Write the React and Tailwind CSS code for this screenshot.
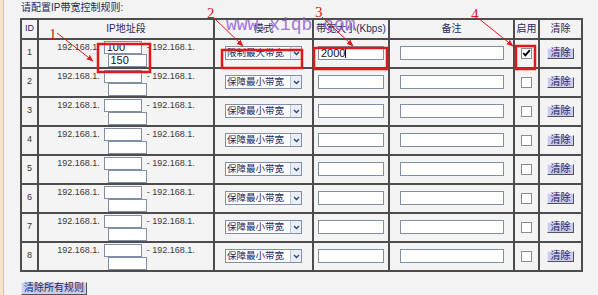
import React from 'react';

const ROWS = [1, 2, 3, 4, 5, 6, 7, 8];

const font = "font-['Liberation_Sans','Noto_Sans_CJK_SC',sans-serif]";

function TextBox({ w, h = 13, value, cursor, className = '' }) {
  return (
    <div
      className={`bg-white border border-[#7f8fa8] flex items-center pl-[2px] text-[11px] leading-none text-[#111] ${className}`}
      style={{ width: w, height: h }}
    >
      {value}
      {cursor && <span className="w-px h-[10px] bg-black" />}
    </div>
  );
}

function Select({ label }) {
  return (
    <div className="w-[77px] h-[14px] bg-white border border-[#7f8fa8] flex items-stretch">
      <div className="flex-1 flex items-center pl-[1px] text-[9.5px] leading-none text-[#1d2658] whitespace-nowrap">{label}</div>
      <div className="w-[11px] shrink-0 bg-[#e9eef8] border-l border-[#b8c4dc] flex items-center justify-center">
        <svg width="7" height="5" viewBox="0 0 7 5">
          <path d="M1 1 L3.5 3.5 L6 1" fill="none" stroke="#2b3f7a" strokeWidth="1.3" />
        </svg>
      </div>
    </div>
  );
}

function ClearBtn({ label = '清除', className = '' }) {
  return (
    <div
      className={`bg-[#c9cbf2] border border-[#e8e8ff] border-r-[#555] border-b-[#555] text-[10px] leading-none text-[#1d2658] flex items-center justify-center ${className}`}
    >
      {label}
    </div>
  );
}

function Check({ checked }) {
  return (
    <div className="w-[11px] h-[11px] bg-white border border-[#8c8c8c] flex items-center justify-center">
      {checked && (
        <svg width="9" height="8" viewBox="0 0 9 8">
          <path d="M1.2 4 L3.4 6.3 L7.8 1.2" fill="none" stroke="#000" strokeWidth="1.8" />
        </svg>
      )}
    </div>
  );
}

const cell = 'bg-[#f4f4f4] flex items-center justify-center';

export default function App() {
  return (
    <div className={`relative w-[598px] h-[295px] overflow-hidden bg-[#f3f3f3] flex ${font}`}>
      <div className="w-[4px] shrink-0 bg-[#f6e4c8] border-r border-[#e6bf8c]" />

      <div className="pl-[16px] flex flex-col">
        <div className="h-[21px] pt-[2px] pl-px text-[10px] leading-[12px] text-[#1f2a5c]">请配置IP带宽控制规则:</div>

        <div className="grid grid-cols-[15px_174px_97px_74px_123px_23px_41px] grid-rows-[18px_repeat(8,27px)] gap-[2px] p-[2px] bg-[#4d4d4d] w-[563px]">
          <div className={`${cell} text-[9px] text-[#1f2a5c]`}>ID</div>
          <div className={`${cell} text-[10px] text-[#1f2a5c]`}>IP地址段</div>
          <div className={`${cell} text-[10px] text-[#1f2a5c]`}>模式</div>
          <div className={`${cell} text-[10px] text-[#1f2a5c]`}>带宽大小(Kbps)</div>
          <div className={`${cell} text-[10px] text-[#1f2a5c]`}>备注</div>
          <div className={`${cell} text-[10px] text-[#1f2a5c]`}>启用</div>
          <div className={`${cell} text-[10px] text-[#1f2a5c]`}>清除</div>

          {ROWS.map((id) => {
            const first = id === 1;
            return (
              <React.Fragment key={id}>
                <div className={`${cell} text-[9px] text-[#333]`}>{id}</div>
                <div className="bg-[#f4f4f4] flex flex-col items-center justify-start pt-[1px]">
                  <div className="flex items-start text-[9px] leading-[10px] text-[#3a3a3a]">
                    <span className="pt-[1px] mr-[4px]">192.168.1.</span>
                    <TextBox w={38} value={first ? '100' : ''} />
                    <span className="pt-[1px] ml-[5px]">- 192.168.1.</span>
                  </div>
                  <TextBox w={39} h={13} value={first ? '150' : ''} className="ml-[2px]" />
                </div>
                <div className={cell}>
                  <Select label={first ? '限制最大带宽' : '保障最小带宽'} />
                </div>
                <div className={cell}>
                  <TextBox w={66} h={14} value={first ? '2000' : ''} cursor={first} />
                </div>
                <div className={cell}>
                  <TextBox w={104} h={14} />
                </div>
                <div className={cell}>
                  <Check checked={first} />
                </div>
                <div className={cell}>
                  <ClearBtn className="w-[27px] h-[11px]" />
                </div>
              </React.Fragment>
            );
          })}
        </div>

        <ClearBtn label="清除所有规则" className="mt-[10px] ml-px w-[66px] h-[16px] self-start" />
      </div>

      {/* annotations */}
      <div className="absolute left-[226px] top-[16px] text-[18px] leading-[18px] text-[#9a68d4] font-['Liberation_Mono',monospace] opacity-90 pointer-events-none">
        www.xiqb.com
      </div>
      <svg className="absolute inset-0 pointer-events-none" width="598" height="295" viewBox="0 0 598 295">
        <defs>
          <marker id="ah" viewBox="0 0 10 10" refX="9" refY="5" markerWidth="7" markerHeight="7" orient="auto">
            <path d="M0 1 L10 5 L0 9 Z" fill="#e01818" />
          </marker>
        </defs>
        <g stroke="#e01818" strokeWidth="1" fill="none">
          <line x1="57" y1="33" x2="93" y2="61" markerEnd="url(#ah)" />
          <line x1="213" y1="17" x2="243" y2="46" markerEnd="url(#ah)" />
          <line x1="322" y1="17" x2="353" y2="46" markerEnd="url(#ah)" />
          <line x1="478" y1="18" x2="513" y2="46" markerEnd="url(#ah)" />
        </g>
        <g stroke="#e01818" strokeWidth="2.5" fill="none">
          <rect x="98" y="44" width="52" height="28" />
          <rect x="222" y="50" width="80" height="18" />
          <rect x="314" y="48" width="73" height="21" />
          <rect x="516" y="46" width="19" height="23" />
        </g>
        <g fill="#d42020" fontFamily="Liberation Serif, serif" fontSize="15">
          <text x="49" y="39">1</text>
          <text x="207" y="18">2</text>
          <text x="315" y="17">3</text>
          <text x="471" y="19">4</text>
        </g>
      </svg>
    </div>
  );
}
